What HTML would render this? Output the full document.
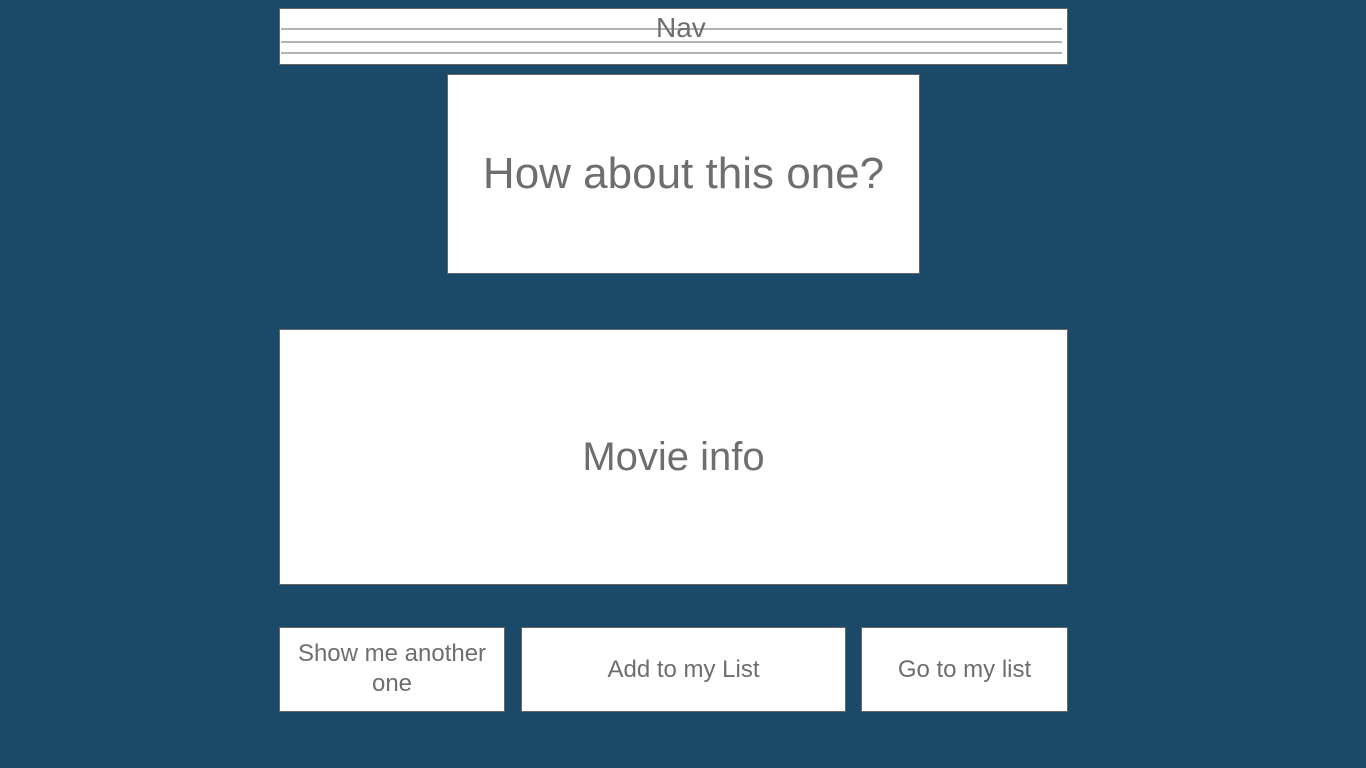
<!DOCTYPE html>
<html><head><style>
html,body{margin:0;padding:0;width:1366px;height:768px;background:#1b4a68;overflow:hidden;font-family:"Liberation Sans",Arial,sans-serif;color:#6e6e6e}
.b{position:absolute;background:#fff;border:1px solid #666;box-sizing:border-box;display:flex;align-items:center;justify-content:center;text-align:center}
.l{position:absolute;left:1px;width:781px;height:2px;background:#b3b3b3}
</style></head><body>
<div class="b" style="left:279px;top:8px;width:789px;height:57px;">
<div class="l" style="top:19px"></div><div class="l" style="top:32px"></div><div class="l" style="top:43px"></div>
<span style="position:absolute;left:376px;top:3px;font-size:28px;">Nav</span>
</div>
<div class="b" style="left:447px;top:74px;width:473px;height:200px;font-size:44px;">How about this one?</div>
<div class="b" style="left:279px;top:329px;width:789px;height:256px;font-size:40px;">Movie info</div>
<div class="b" style="left:279px;top:627px;width:226px;height:85px;font-size:24px;line-height:30px;padding-bottom:2px;">Show me another<br>one</div>
<div class="b" style="left:521px;top:627px;width:325px;height:85px;font-size:24px;">Add to my List</div>
<div class="b" style="left:861px;top:627px;width:207px;height:85px;font-size:24px;">Go to my list</div>
</body></html>
